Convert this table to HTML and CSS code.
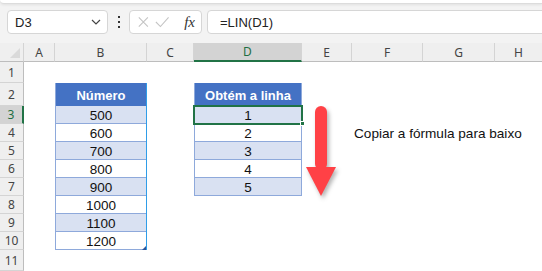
FILE: index.html
```html
<!DOCTYPE html>
<html lang="pt">

<head>
    <meta charset="UTF-8">
    <title>LIN - copiar a fórmula</title>
    <link rel="stylesheet" href="styles.css">
</head>

<body>
    <div class="ribbon-edge"></div>

    <div class="formula-bar">
        <div class="name-box">
            <span>D3</span>
            <svg class="chevron" width="10" height="6" viewBox="0 0 10 6">
                <path d="M1 1 L5 5 L9 1" fill="none" stroke="#444" stroke-width="1.2" />
            </svg>
        </div>
        <div class="grip">
            <span></span><span></span><span></span>
        </div>
        <div class="fx-box">
            <svg width="14" height="14" viewBox="0 0 14 14">
                <path d="M2 2 L12 12 M12 2 L2 12" stroke="#c4c4c4" stroke-width="1.2" />
            </svg>
            <svg width="16" height="14" viewBox="0 0 16 14">
                <path d="M1 7 L6 12 L15 2" fill="none" stroke="#c4c4c4" stroke-width="1.2" />
            </svg>
            <span class="fx">fx</span>
        </div>
        <div class="formula-input">=LIN(D1)</div>
    </div>

    <div class="sheet">
        <div class="corner"><span class="corner-tri"></span></div>
        <div class="col-head">A</div>
        <div class="col-head">B</div>
        <div class="col-head">C</div>
        <div class="col-head active">D</div>
        <div class="col-head">E</div>
        <div class="col-head">F</div>
        <div class="col-head">G</div>
        <div class="col-head last">H</div>

        <div class="row-head r1">1</div>
        <div class="row-head r2">2</div>
        <div class="row-head r3 active">3</div>
        <div class="row-head r4">4</div>
        <div class="row-head r5">5</div>
        <div class="row-head r6">6</div>
        <div class="row-head r7">7</div>
        <div class="row-head r8">8</div>
        <div class="row-head r9">9</div>
        <div class="row-head r10">10</div>
        <div class="row-head r11">11</div>

        <!-- table in column B -->
        <div class="xl-table table-b">
            <div class="th">Número</div>
            <div class="td band">500</div>
            <div class="td">600</div>
            <div class="td band">700</div>
            <div class="td">800</div>
            <div class="td band">900</div>
            <div class="td">1000</div>
            <div class="td band">1100</div>
            <div class="td">1200</div>
            <span class="resize-handle"></span>
        </div>

        <!-- table in column D -->
        <div class="xl-table table-d">
            <div class="th">Obtém a linha</div>
            <div class="td band selected">1<span class="fill-handle"></span></div>
            <div class="td">2</div>
            <div class="td band">3</div>
            <div class="td">4</div>
            <div class="td band">5</div>
        </div>

        <div class="arrow">
            <svg width="50" height="92" viewBox="0 0 50 92">
                <rect x="13" y="0" width="12" height="64" rx="6" fill="#ff4146" />
                <path d="M4 61 L34 61 L19 90 Z" fill="#ff4146" />
            </svg>
        </div>

        <div class="note">Copiar a fórmula para baixo</div>
    </div>
</body>

</html>
```

FILE: styles.css
```css
* {
    box-sizing: border-box;
}

body {
    margin: 0;
    width: 542px;
    height: 271px;
    overflow: hidden;
    background: #f3f3f3;
    font-family: "Liberation Sans", Arial, sans-serif;
}

.ribbon-edge {
    height: 4px;
    background: #fff;
    border-bottom: 1px solid #dcdcdc;
    border-bottom-left-radius: 8px;
    box-shadow: 0 1px 3px rgba(0, 0, 0, 0.08);
}

/* Formula bar */
.formula-bar {
    display: flex;
    align-items: center;
    height: 39px;
    padding: 0 0 3px 7px;
}

.name-box,
.fx-box,
.formula-input {
    height: 24px;
    background: #fff;
    border: 1px solid #d6d6d6;
    border-radius: 4px;
    display: flex;
    align-items: center;
}

.name-box {
    width: 101px;
    padding: 0 6px 0 7px;
    justify-content: space-between;
    font-size: 13px;
    color: #222;
}

.grip {
    width: 21px;
    display: flex;
    flex-direction: column;
    align-items: center;
    gap: 3px;
}

.grip span {
    width: 2px;
    height: 2px;
    background: #333;
}

.fx-box {
    width: 73px;
    padding: 0 6px 0 7px;
    gap: 5px;
}

.fx {
    margin-left: 10px;
    font-family: "Liberation Serif", serif;
    font-style: italic;
    font-size: 15px;
    color: #333;
}

.formula-input {
    flex: 1;
    margin-left: 5px;
    margin-right: -6px;
    padding-left: 12px;
    font-size: 13px;
    color: #222;
}

/* Sheet grid */
.sheet {
    display: grid;
    grid-template-columns: 24px 31px 92px 47px 108px 50px 71px 72px 1fr;
    grid-template-rows: 19px 21px 23px repeat(8, 18px) 21px;
    background: #fff;
}

.corner {
    background: #efefef;
    border-bottom: 1px solid #bdbdbd;
    border-right: 1px solid #d4d4d4;
    position: relative;
}

.corner-tri {
    position: absolute;
    right: 3px;
    bottom: 3px;
    width: 0;
    height: 0;
    border-left: 10px solid transparent;
    border-bottom: 10px solid #dadada;
}

.col-head {
    background: #efefef;
    border-bottom: 1px solid #bdbdbd;
    border-right: 1px solid #d4d4d4;
    font-family: "Noto Sans", sans-serif;
    font-size: 12px;
    color: #444;
    display: flex;
    align-items: center;
    justify-content: center;
}

.col-head.last {
    border-right: none;
}

.col-head.active {
    background: #d3d3d3;
    color: #1e6e42;
    border-bottom: 2px solid #217346;
}

.row-head {
    grid-column: 1;
    background: #efefef;
    border-right: 1px solid #bdbdbd;
    border-bottom: 1px solid #d4d4d4;
    font-family: "Noto Sans", sans-serif;
    font-size: 12px;
    color: #444;
    display: flex;
    align-items: center;
    justify-content: center;
}

.row-head.active {
    background: #d3d3d3;
    color: #1e6e42;
    border-right: 2px solid #217346;
}

.r1 { grid-row: 2; }
.r2 { grid-row: 3; }
.r3 { grid-row: 4; }
.r4 { grid-row: 5; }
.r5 { grid-row: 6; }
.r6 { grid-row: 7; }
.r7 { grid-row: 8; }
.r8 { grid-row: 9; }
.r9 { grid-row: 10; }
.r10 { grid-row: 11; }
.r11 { grid-row: 12; }

/* Excel-style tables */
.xl-table {
    display: flex;
    flex-direction: column;
    border-left: 1px solid #8ea9db;
    border-right: 1px solid #8ea9db;
    position: relative;
    font-size: 13.5px;
    color: #111;
}

.table-b {
    grid-column: 3;
    grid-row: 3 / 12;
    border-right-color: #2f9de8;
}

.table-d {
    grid-column: 5;
    grid-row: 3 / 9;
}

.th {
    height: 23px;
    background: #4472c4;
    color: #fff;
    font-weight: bold;
    font-size: 13px;
    display: flex;
    align-items: center;
    justify-content: center;
    padding-top: 2px;
}

.td {
    height: 18px;
    border-bottom: 1px solid #8ea9db;
    display: flex;
    align-items: center;
    justify-content: center;
    padding-top: 1px;
}

.td.band {
    background: #d9e1f2;
}

.td.selected {
    position: relative;
    outline: 2px solid #217346;
    outline-offset: -1px;
    margin: 0 -1px;
}

.fill-handle {
    position: absolute;
    right: -3px;
    bottom: -3px;
    width: 5px;
    height: 5px;
    background: #217346;
    border: 1px solid #fff;
}

.resize-handle {
    position: absolute;
    right: 0;
    bottom: 0;
    width: 0;
    height: 0;
    border-left: 4px solid transparent;
    border-bottom: 4px solid #2f5597;
}

.arrow {
    grid-column: 6;
    grid-row: 4 / 9;
}

.arrow svg {
    display: block;
    filter: drop-shadow(2px 3px 2px rgba(0, 0, 0, 0.3));
}

.note {
    grid-column: 7 / 10;
    grid-row: 5;
    padding-left: 2px;
    font-size: 13.6px;
    color: #111;
    display: flex;
    align-items: center;
    white-space: nowrap;
}
```
